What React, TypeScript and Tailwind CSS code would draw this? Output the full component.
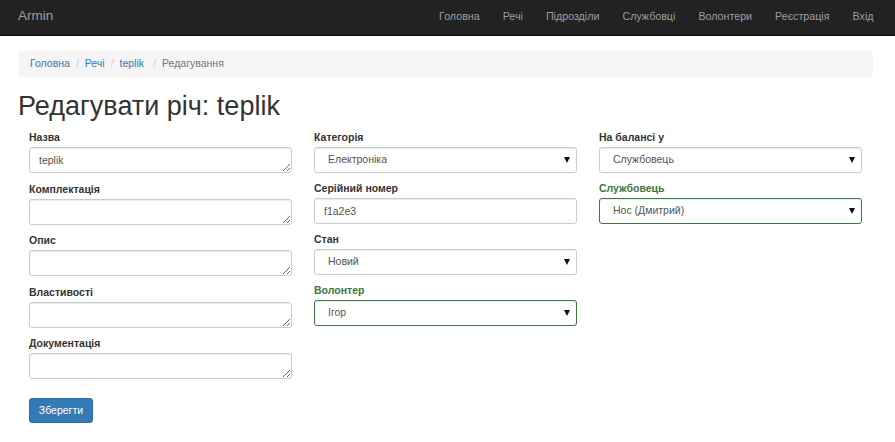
import { ReactNode } from "react";

const navLinks = ["Головна", "Речі", "Підрозділи", "Службовці", "Волонтери", "Реєстрація", "Вхід"];

function Label({ children, success }: { children: ReactNode; success?: boolean }) {
  return (
    <label
      className={`block h-[15px] leading-[15px] mb-[2px] font-bold text-[10.5px] ${success ? "text-[#3c763d]" : "text-[#333]"}`}
    >
      {children}
    </label>
  );
}

function TextArea({ label, value }: { label: string; value?: string }) {
  return (
    <div className="mb-[8.5px]">
      <Label>{label}</Label>
      <textarea
        defaultValue={value}
        className="block w-full h-[26px] border border-[#ccc] rounded-[3px] bg-white px-[9px] py-[5px] text-[10.5px] leading-[14px] text-[#555] shadow-[inset_0_1px_1px_rgba(0,0,0,0.075)] overflow-hidden"
      />
    </div>
  );
}

function TextInput({ label, value }: { label: string; value?: string }) {
  return (
    <div className="mb-[8px]">
      <Label>{label}</Label>
      <input
        defaultValue={value}
        className="block w-full h-[26px] border border-[#ccc] rounded-[3px] bg-white px-[9px] text-[10.5px] text-[#555] shadow-[inset_0_1px_1px_rgba(0,0,0,0.075)]"
      />
    </div>
  );
}

function Select({ label, value, success }: { label: string; value: string; success?: boolean }) {
  return (
    <div className="mb-[8px]">
      <Label success={success}>{label}</Label>
      <div className="relative">
        <select
          defaultValue={value}
          className={`block w-full h-[26px] appearance-none border rounded-[3px] bg-white pl-[13px] pr-[20px] text-[10.5px] text-[#555] shadow-[inset_0_1px_1px_rgba(0,0,0,0.075)] ${success ? "border-[#3c763d]" : "border-[#ccc]"}`}
        >
          <option>{value}</option>
        </select>
        <svg className="absolute right-[7px] top-[10px] pointer-events-none" width="6" height="6" viewBox="0 0 6 6">
          <polygon points="0,0 6,0 3,6" fill="#111" />
        </svg>
      </div>
    </div>
  );
}

export default function App() {
  return (
    <div className="min-h-screen bg-white font-['Liberation_Sans',Arial,sans-serif] text-[#333] text-[10.5px]">
      <nav className="flex items-center h-[36px] bg-[#222] border-b border-[#080808] pl-[18px] pr-[10px]">
        <span className="text-[13.5px] text-[#9d9d9d] pb-[2px]">Armin</span>
        <ul className="ml-auto flex pb-[2px]">
          {navLinks.map((l) => (
            <li key={l} className="px-[11.5px] text-[10.7px] text-[#9d9d9d]">
              {l}
            </li>
          ))}
        </ul>
      </nav>

      <div className="pl-[18px] pr-[22px]">
        <ol className="mt-[15px] flex items-center h-[26px] bg-[#f5f5f5] rounded-[3px] px-[12px] text-[10.5px]">
          <li className="text-[#337ab7]">Головна</li>
          <li className="px-[6px] text-[#ccc]">/</li>
          <li className="text-[#337ab7]">Речі</li>
          <li className="px-[6px] text-[#ccc]">/</li>
          <li className="text-[#337ab7] pr-[3px]">teplik</li>
          <li className="px-[6px] text-[#ccc]">/</li>
          <li className="text-[#777]">Редагування</li>
        </ol>

        <h1 className="mt-[14px] text-[27px] leading-[30px] font-medium text-[#333]">Редагувати річ: teplik</h1>

        <form className="mt-[9px] grid grid-cols-3">
          <div className="px-[11px]">
            <TextArea label="Назва" value="teplik" />
            <TextArea label="Комплектація" />
            <TextArea label="Опис" />
            <TextArea label="Властивості" />
            <TextArea label="Документація" />
            <button
              type="button"
              className="mt-[10.5px] h-[25px] w-[64px] rounded-[3px] bg-[#337ab7] border border-[#2e6da4] text-white text-[10.5px]"
            >
              Зберегти
            </button>
          </div>
          <div className="px-[11px]">
            <Select label="Категорія" value="Електроніка" />
            <TextInput label="Серійний номер" value="f1a2e3" />
            <Select label="Стан" value="Новий" />
            <Select label="Волонтер" value="Ігор" success />
          </div>
          <div className="px-[11px]">
            <Select label="На балансі у" value="Службовець" />
            <Select label="Службовець" value="Нос (Дмитрий)" success />
          </div>
        </form>
      </div>
    </div>
  );
}
